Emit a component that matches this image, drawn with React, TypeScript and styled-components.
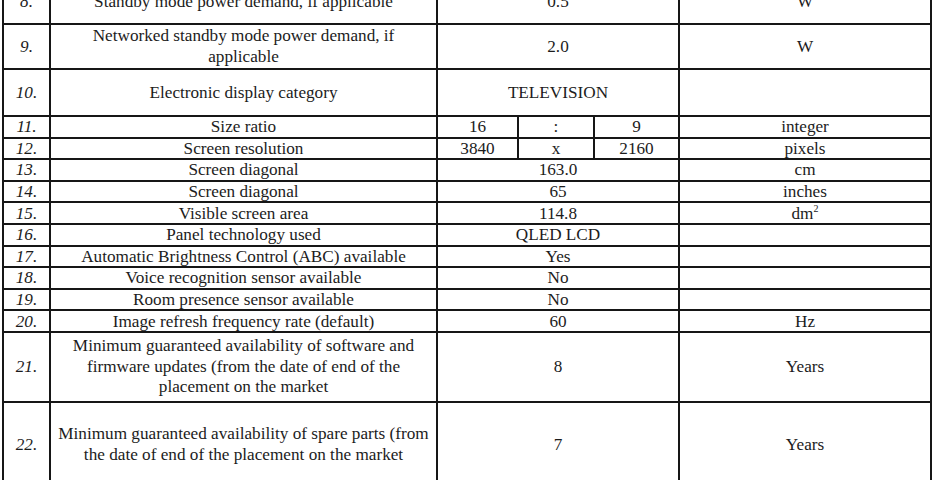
import React from 'react';
import styled, { createGlobalStyle } from 'styled-components';

const GlobalStyle = createGlobalStyle`
  html, body {
    margin: 0;
    padding: 0;
    background: #ffffff;
    overflow: hidden;
  }
`;

const Page = styled.div`
  width: 934px;
  height: 480px;
  overflow: hidden;
  padding-left: 2px;
  box-sizing: border-box;
`;

const Table = styled.table`
  margin-top: -22px;
  border-collapse: collapse;
  table-layout: fixed;
  width: 928px;
  font-family: "Liberation Serif", "Times New Roman", serif;
  font-size: 17.2px;
  color: #1c1c1c;
`;

const Col = styled.col<{ $w: number }>`
  width: ${(p) => p.$w}px;
`;

const Cell = styled.td<{ $h: number }>`
  height: ${(p) => p.$h}px;
  border: 2px solid #161616;
  padding: 0 3px;
  text-align: center;
  vertical-align: middle;
  line-height: 17px;
  white-space: nowrap;
  box-sizing: border-box;
`;

const NumCell = styled(Cell)`
  font-style: italic;
`;

const Lines = styled.span`
  display: block;
  line-height: 20.5px;
`;

const Sup = styled.sup`
  font-size: 10px;
  vertical-align: 7px;
  line-height: 0;
`;

type Row = {
  n: string;
  label: React.ReactNode;
  value: React.ReactNode;
  split?: [string, string, string];
  unit?: React.ReactNode;
  h: number;
};

const rows: Row[] = [
  { n: '8.', label: 'Standby mode power demand, if applicable', value: '0.5', unit: 'W', h: 45 },
  { n: '9.', label: <Lines>Networked standby mode power demand, if<br />applicable</Lines>, value: '2.0', unit: 'W', h: 45 },
  { n: '10.', label: 'Electronic display category', value: 'TELEVISION', h: 47 },
  { n: '11.', label: 'Size ratio', value: '', split: ['16', ':', '9'], unit: 'integer', h: 21.6 },
  { n: '12.', label: 'Screen resolution', value: '', split: ['3840', 'x', '2160'], unit: 'pixels', h: 21.6 },
  { n: '13.', label: 'Screen diagonal', value: '163.0', unit: 'cm', h: 21.6 },
  { n: '14.', label: 'Screen diagonal', value: '65', unit: 'inches', h: 21.6 },
  { n: '15.', label: 'Visible screen area', value: '114.8', unit: <>dm<Sup>2</Sup></>, h: 21.6 },
  { n: '16.', label: 'Panel technology used', value: 'QLED LCD', h: 21.6 },
  { n: '17.', label: 'Automatic Brightness Control (ABC) available', value: 'Yes', h: 21.6 },
  { n: '18.', label: 'Voice recognition sensor available', value: 'No', h: 21.6 },
  { n: '19.', label: 'Room presence sensor available', value: 'No', h: 21.6 },
  { n: '20.', label: 'Image refresh frequency rate (default)', value: '60', unit: 'Hz', h: 21.6 },
  {
    n: '21.',
    label: (
      <Lines>
        Minimum guaranteed availability of software and<br />
        firmware updates (from the date of end of the<br />
        placement on the market
      </Lines>
    ),
    value: '8',
    unit: 'Years',
    h: 70,
  },
  {
    n: '22.',
    label: (
      <Lines>
        Minimum guaranteed availability of spare parts (from<br />
        the date of end of the placement on the market
      </Lines>
    ),
    value: '7',
    unit: 'Years',
    h: 86,
  },
];

const widths = [47, 387, 81, 76, 85, 252];

export default function App() {
  return (
    <Page>
      <GlobalStyle />
      <Table>
        <colgroup>
          {widths.map((w, i) => (
            <Col key={i} $w={w} />
          ))}
        </colgroup>
        <tbody>
          {rows.map((r) => (
            <tr key={r.n}>
              <NumCell $h={r.h}>{r.n}</NumCell>
              <Cell $h={r.h}>{r.label}</Cell>
              {r.split ? (
                r.split.map((s, i) => (
                  <Cell key={i} $h={r.h}>{s}</Cell>
                ))
              ) : (
                <Cell $h={r.h} colSpan={3}>{r.value}</Cell>
              )}
              <Cell $h={r.h}>{r.unit}</Cell>
            </tr>
          ))}
        </tbody>
      </Table>
    </Page>
  );
}
